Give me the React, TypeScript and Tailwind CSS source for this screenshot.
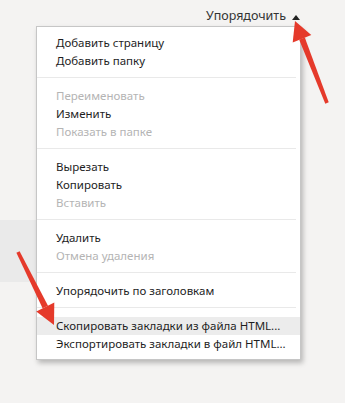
import React from 'react';

type Item = { label: string; disabled?: boolean; active?: boolean };

const groups: Item[][] = [
  [{ label: 'Добавить страницу' }, { label: 'Добавить папку' }],
  [
    { label: 'Переименовать', disabled: true },
    { label: 'Изменить' },
    { label: 'Показать в папке', disabled: true },
  ],
  [{ label: 'Вырезать' }, { label: 'Копировать' }, { label: 'Вставить', disabled: true }],
  [{ label: 'Удалить' }, { label: 'Отмена удаления', disabled: true }],
  [{ label: 'Упорядочить по заголовкам' }],
  [
    { label: 'Скопировать закладки из файла HTML...', active: true },
    { label: 'Экспортировать закладки в файл HTML...' },
  ],
];

function MenuRow({ item }: { item: Item }) {
  return (
    <div
      className={`h-[18px] flex items-center pl-[19px] whitespace-nowrap ${
        item.active ? 'bg-[#ececec]' : ''
      } ${item.disabled ? 'text-[#b4b4b4]' : 'text-[#1e1e1e]'}`}
    >
      {item.label}
    </div>
  );
}

function Arrows() {
  return (
    <svg
      className="absolute inset-0 pointer-events-none"
      width="345"
      height="403"
      viewBox="0 0 345 403"
    >
      {/* top-right arrow */}
      <polygon points="295,21 311.3,35 292.7,42.4" fill="#e53a2b" />
      <polygon points="304.8,37.6 328.7,102.3 325.3,103.7 299.2,39.8" fill="#e53a2b" />
      {/* left arrow */}
      <polygon points="54,325 54.3,302.6 36.3,311.4" fill="#e53a2b" />
      <polygon points="48,305.7 19.6,251.2 16.4,252.8 42.6,308.3" fill="#e53a2b" />
    </svg>
  );
}

export default function App() {
  return (
    <div
      className="relative w-[345px] h-[403px] overflow-hidden bg-[#f4f3f2] text-[11.5px]"
      style={{ fontFamily: '"Noto Sans", "Open Sans", sans-serif' }}
    >
      <div className="h-[26px] flex items-end justify-end pr-[45px] pb-[1px]">
        <span className="text-[12.5px] leading-[18px] text-[#333]">Упорядочить</span>
        <span className="ml-[6px] mb-[5px] w-0 h-0 border-l-[4px] border-r-[4px] border-b-[5px] border-l-transparent border-r-transparent border-b-[#222]" />
      </div>

      <div className="mt-[194px] w-[120px] h-[62px] bg-[#eaeaea]" />

      <div className="absolute top-[26px] left-[36px] w-[265px] bg-white border border-[#c6c6c6] shadow-[2px_3px_5px_rgba(0,0,0,0.25)] pt-[7px] pb-[6px]">
        {groups.map((g, gi) => (
          <div key={gi}>
            {gi > 0 && <div className="mt-[7px] mb-[9px] h-px bg-[#e9e9e9] mr-[4px]" />}
            {g.map((item) => (
              <MenuRow key={item.label} item={item} />
            ))}
          </div>
        ))}
      </div>

      <Arrows />
    </div>
  );
}
